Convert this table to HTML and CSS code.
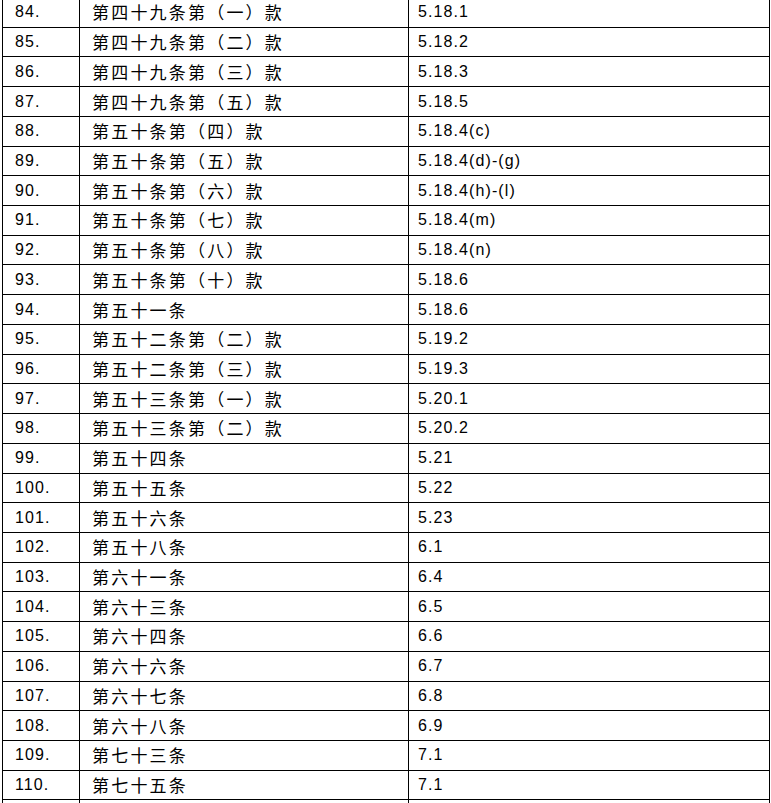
FILE: index.html
```html
<!DOCTYPE html>
<html lang="zh">
<head>
<meta charset="utf-8">
<link rel="stylesheet" href="styles.css">
</head>
<body>
<table class="map">
<colgroup><col class="c1"><col class="c2"><col class="c3"></colgroup>
<tbody>
<tr><td class="num">84.</td><td class="zh">第四十九条第（一）款</td><td class="ref">5.18.1</td></tr>
<tr><td class="num">85.</td><td class="zh">第四十九条第（二）款</td><td class="ref">5.18.2</td></tr>
<tr><td class="num">86.</td><td class="zh">第四十九条第（三）款</td><td class="ref">5.18.3</td></tr>
<tr><td class="num">87.</td><td class="zh">第四十九条第（五）款</td><td class="ref">5.18.5</td></tr>
<tr><td class="num">88.</td><td class="zh">第五十条第（四）款</td><td class="ref">5.18.4(c)</td></tr>
<tr><td class="num">89.</td><td class="zh">第五十条第（五）款</td><td class="ref">5.18.4(d)-(g)</td></tr>
<tr><td class="num">90.</td><td class="zh">第五十条第（六）款</td><td class="ref">5.18.4(h)-(l)</td></tr>
<tr><td class="num">91.</td><td class="zh">第五十条第（七）款</td><td class="ref">5.18.4(m)</td></tr>
<tr><td class="num">92.</td><td class="zh">第五十条第（八）款</td><td class="ref">5.18.4(n)</td></tr>
<tr><td class="num">93.</td><td class="zh">第五十条第（十）款</td><td class="ref">5.18.6</td></tr>
<tr><td class="num">94.</td><td class="zh">第五十一条</td><td class="ref">5.18.6</td></tr>
<tr><td class="num">95.</td><td class="zh">第五十二条第（二）款</td><td class="ref">5.19.2</td></tr>
<tr><td class="num">96.</td><td class="zh">第五十二条第（三）款</td><td class="ref">5.19.3</td></tr>
<tr><td class="num">97.</td><td class="zh">第五十三条第（一）款</td><td class="ref">5.20.1</td></tr>
<tr><td class="num">98.</td><td class="zh">第五十三条第（二）款</td><td class="ref">5.20.2</td></tr>
<tr><td class="num">99.</td><td class="zh">第五十四条</td><td class="ref">5.21</td></tr>
<tr><td class="num">100.</td><td class="zh">第五十五条</td><td class="ref">5.22</td></tr>
<tr><td class="num">101.</td><td class="zh">第五十六条</td><td class="ref">5.23</td></tr>
<tr><td class="num">102.</td><td class="zh">第五十八条</td><td class="ref">6.1</td></tr>
<tr><td class="num">103.</td><td class="zh">第六十一条</td><td class="ref">6.4</td></tr>
<tr><td class="num">104.</td><td class="zh">第六十三条</td><td class="ref">6.5</td></tr>
<tr><td class="num">105.</td><td class="zh">第六十四条</td><td class="ref">6.6</td></tr>
<tr><td class="num">106.</td><td class="zh">第六十六条</td><td class="ref">6.7</td></tr>
<tr><td class="num">107.</td><td class="zh">第六十七条</td><td class="ref">6.8</td></tr>
<tr><td class="num">108.</td><td class="zh">第六十八条</td><td class="ref">6.9</td></tr>
<tr><td class="num">109.</td><td class="zh">第七十三条</td><td class="ref">7.1</td></tr>
<tr><td class="num">110.</td><td class="zh">第七十五条</td><td class="ref">7.1</td></tr>
<tr><td class="num"></td><td class="zh"></td><td class="ref"></td></tr>
</tbody>
</table>
</body>
</html>
```

FILE: styles.css
```css
html, body {
  margin: 0;
  padding: 0;
  background: #ffffff;
  overflow: hidden;
}
body {
  padding-left: 2px;
}
.map {
  border-collapse: collapse;
  table-layout: fixed;
  width: 767px;
  margin-top: -3px;
  color: #000000;
}
.c1 { width: 77px; }
.c2 { width: 329px; }
.c3 { width: 361px; }
.map td {
  border: 1px solid #000000;
  height: 28.73px;
  padding: 0 0 0 11px;
  line-height: 20px;
  vertical-align: middle;
  white-space: nowrap;
  overflow: hidden;
}
.num, .ref {
  font-family: "Liberation Sans", Arial, sans-serif;
  font-size: 16px;
  letter-spacing: 1.1px;
}
.map td.num { padding-left: 12px; }
.map td.ref { padding-left: 9px; }
.zh {
  font-family: "Noto Sans CJK SC", "Noto Sans", sans-serif;
  font-size: 17px;
  letter-spacing: 2.2px;
}
.map td.zh { padding-left: 12px; }
```
